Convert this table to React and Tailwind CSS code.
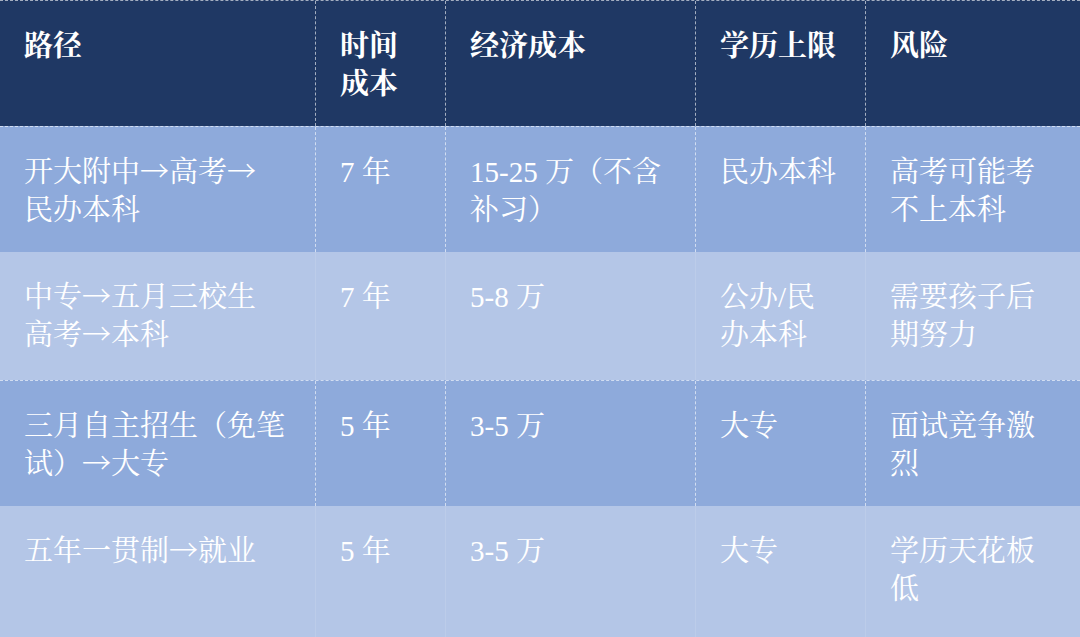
const cols = "grid grid-cols-[315px_130px_250px_170px_215px]";
const font = { fontFamily: '"Liberation Serif", "Noto Serif CJK SC", "Noto Sans CJK SC", serif' };

const header = [["路径"], ["时间", "成本"], ["经济成本"], ["学历上限"], ["风险"]];

const rows = [
  {
    h: "h-[126px]",
    dark: true,
    cells: [["开大附中→高考→", "民办本科"], ["7 年"], ["15-25 万（不含", "补习）"], ["民办本科"], ["高考可能考", "不上本科"]],
  },
  {
    h: "h-[128px]",
    dark: false,
    cells: [["中专→五月三校生", "高考→本科"], ["7 年"], ["5-8 万"], ["公办/民", "办本科"], ["需要孩子后", "期努力"]],
  },
  {
    h: "h-[126px]",
    dark: true,
    cells: [["三月自主招生（免笔", "试）→大专"], ["5 年"], ["3-5 万"], ["大专"], ["面试竞争激", "烈"]],
  },
  {
    h: "h-[131px]",
    dark: false,
    cells: [["五年一贯制→就业"], ["5 年"], ["3-5 万"], ["大专"], ["学历天花板", "低"]],
  },
];

// arrows look wrong in Liberation Serif, take them from the CJK font
function Line({ text }) {
  const parts = text.split("→");
  return (
    <div className="h-[38px]">
      {parts.map((p, i) => (
        <span key={i}>
          {p}
          {i < parts.length - 1 && (
            <span style={{ fontFamily: '"Noto Sans CJK SC", sans-serif' }} className="font-light leading-none">
              →
            </span>
          )}
        </span>
      ))}
    </div>
  );
}

function Cell({ lines, dark, bold, first }) {
  return (
    <div
      className={
        "pl-6 pr-2 pt-[26px] text-[29px] leading-[38px] text-white whitespace-nowrap " +
        (bold ? "font-bold " : "font-normal ") +
        (first ? "" : dark ? "border-l border-dashed border-white/60" : "border-l border-white/10")
      }
    >
      {lines.map((l, i) => (
        <Line key={i} text={l} />
      ))}
    </div>
  );
}

export default function App() {
  return (
    <div className="w-[1080px] h-[637px] overflow-hidden bg-[#b4c6e7]" style={font}>
      <div className={cols + " h-[126px] bg-[#1f3864] border-t border-dashed border-white/60"}>
        {header.map((c, i) => (
          <Cell key={i} lines={c} dark bold first={i === 0} />
        ))}
      </div>
      {rows.map((r, ri) => (
        <div
          key={ri}
          className={
            cols +
            " " +
            r.h +
            " " +
            (r.dark ? "bg-[#8eaadb] border-t border-dashed border-white/60" : "bg-[#b4c6e7]")
          }
        >
          {r.cells.map((c, i) => (
            <Cell key={i} lines={c} dark={r.dark} first={i === 0} />
          ))}
        </div>
      ))}
    </div>
  );
}
